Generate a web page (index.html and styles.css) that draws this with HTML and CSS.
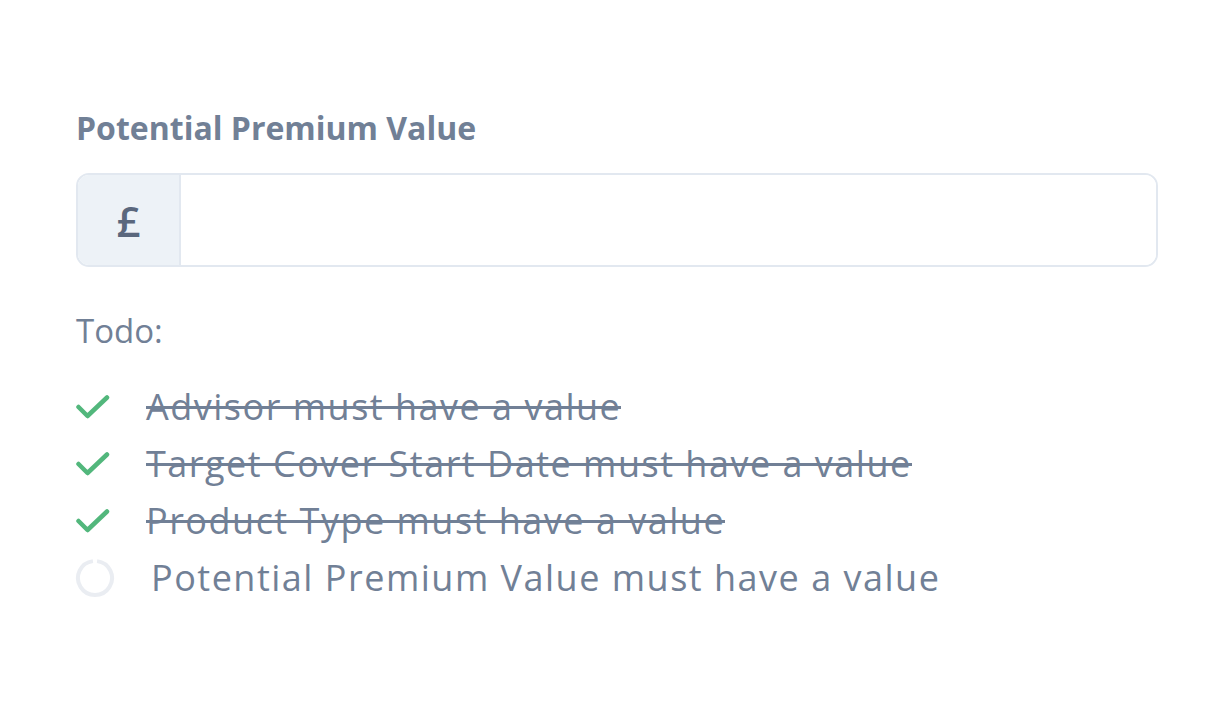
FILE: index.html
```html
<!DOCTYPE html>
<html lang="en">
<head>
    <meta charset="UTF-8">
    <meta name="viewport" content="width=device-width, initial-scale=1.0">
    <title>Potential Premium Value</title>
    <link rel="stylesheet" href="styles.css">
</head>
<body>
    <div class="wrapper">
        <label class="field-label" for="premium">Potential Premium Value</label>
        <div class="input-group">
            <span class="input-prefix">£</span>
            <input type="text" id="premium" class="input-field">
        </div>

        <p class="todo-title">Todo:</p>
        <ul class="todo-list">
            <li class="todo-item done">
                <svg class="icon-check" width="34" height="28" viewBox="0 0 34 28">
                    <polyline points="2.5,14 11.5,23 31,4.5" />
                </svg>
                <span class="todo-text">Advisor must have a value</span>
            </li>
            <li class="todo-item done">
                <svg class="icon-check" width="34" height="28" viewBox="0 0 34 28">
                    <polyline points="2.5,14 11.5,23 31,4.5" />
                </svg>
                <span class="todo-text">Target Cover Start Date must have a value</span>
            </li>
            <li class="todo-item done">
                <svg class="icon-check" width="34" height="28" viewBox="0 0 34 28">
                    <polyline points="2.5,14 11.5,23 31,4.5" />
                </svg>
                <span class="todo-text">Product Type must have a value</span>
            </li>
            <li class="todo-item pending">
                <svg class="icon-pending" width="40" height="40" viewBox="0 0 40 40">
                    <path d="M22.07 3.13 A17 17 0 1 1 17.93 3.13" />
                </svg>
                <span class="todo-text">Potential Premium Value must have a value</span>
            </li>
        </ul>
    </div>
</body>
</html>
```
FILE: styles.css
```css
* {
    padding: 0;
    margin: 0;
    box-sizing: border-box;
}
body {
    background: #ffffff;
    font-family: "Open Sans", "Noto Sans", sans-serif;
    color: #718096;
}
.wrapper {
    padding: 108px 67px 0 76px;
}
.field-label {
    display: block;
    font-size: 32px;
    font-weight: 700;
    line-height: 40px;
    margin-bottom: 25px;
}
.input-group {
    display: flex;
    height: 94px;
    border: 2px solid #e2e8f0;
    border-radius: 13px;
    overflow: hidden;
}
.input-prefix {
    display: flex;
    align-items: center;
    justify-content: center;
    width: 103px;
    background: #edf2f7;
    border-right: 2px solid #e2e8f0;
    color: #5a677d;
    font-size: 42px;
    font-weight: 600;
}
.input-field {
    flex: 1;
    border: none;
    outline: none;
    padding: 0 24px;
    font-family: inherit;
    font-size: 32px;
    color: #4a5568;
}
.todo-title {
    margin-top: 44px;
    font-size: 33px;
    line-height: 40px;
}
.todo-list {
    list-style: none;
    margin-top: 27px;
}
.todo-item {
    display: flex;
    align-items: center;
    height: 57px;
    font-size: 36px;
    letter-spacing: 1.5px;
}
.icon-check {
    flex-shrink: 0;
    margin-right: 36px;
}
.icon-check polyline {
    fill: none;
    stroke: #52b77c;
    stroke-width: 4.5;
    stroke-linecap: round;
    stroke-linejoin: round;
}
.icon-pending {
    flex-shrink: 0;
    margin-left: -1px;
    margin-right: 36px;
}
.icon-pending path {
    fill: none;
    stroke: #eaedf2;
    stroke-width: 4;
}
/* strike line sits higher than the font's own line-through */
.done .todo-text {
    background: linear-gradient(#718096, #718096) no-repeat 0 24px / 100% 3px;
}
```
